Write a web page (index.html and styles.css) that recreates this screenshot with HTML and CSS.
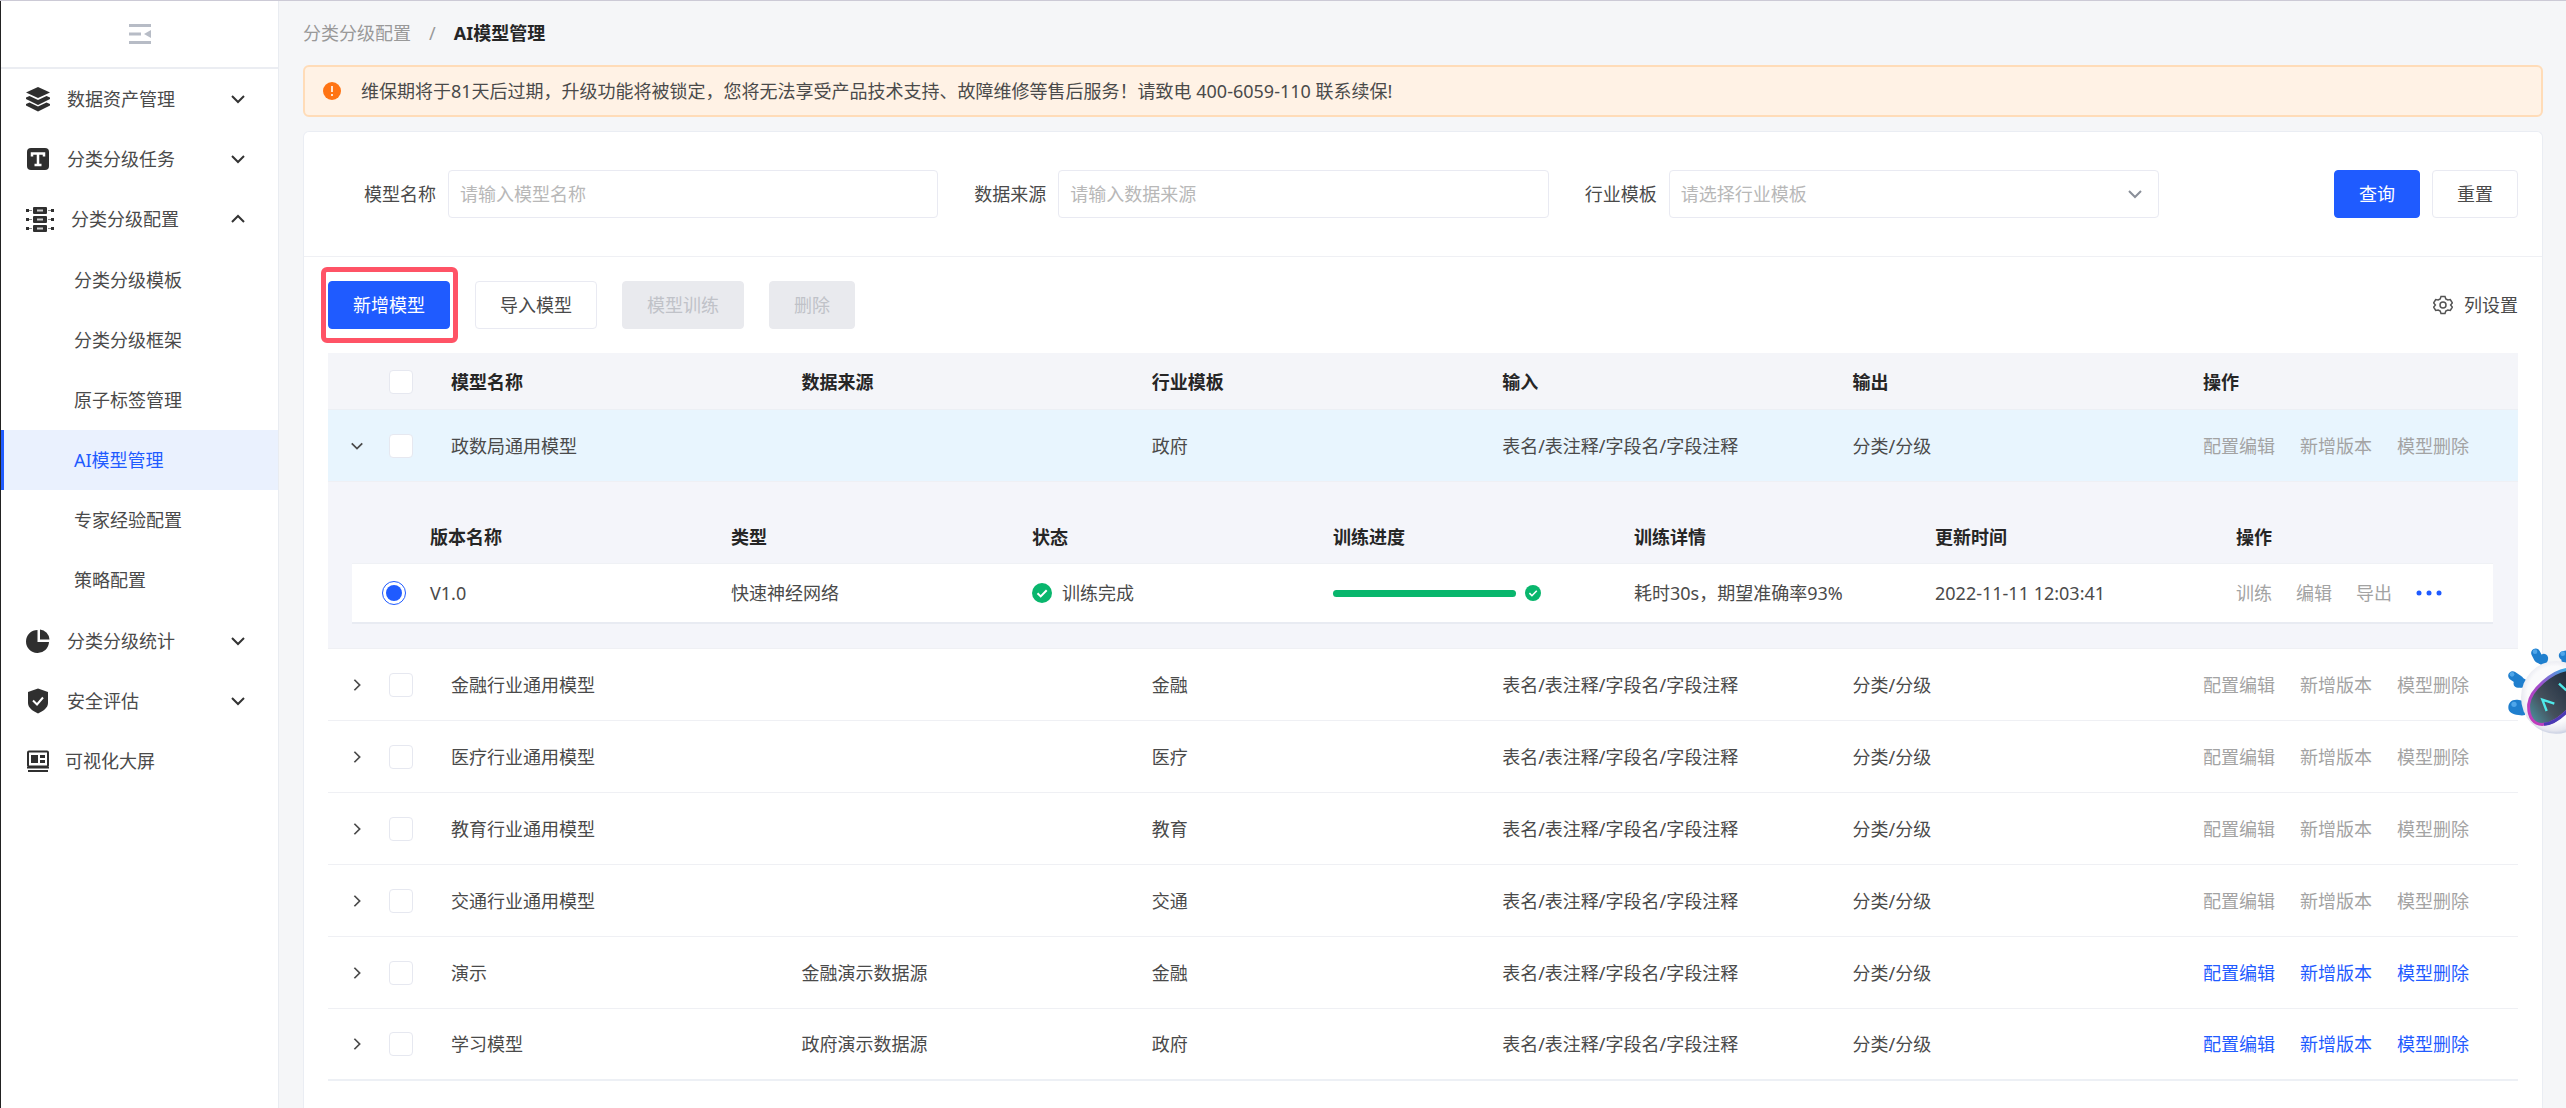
FILE: index.html
```html
<!DOCTYPE html>
<html lang="zh-CN">
<head>
<meta charset="utf-8">
<title>AI模型管理</title>
<link rel="stylesheet" href="styles.css">
</head>
<body>
<svg class="sprite" aria-hidden="true">
  <symbol id="down" viewBox="0 0 16 16"><path d="M2 5l6 6 6-6" fill="none" stroke="currentColor" stroke-width="2"/></symbol>
  <symbol id="up" viewBox="0 0 16 16"><path d="M2 11l6-6 6 6" fill="none" stroke="currentColor" stroke-width="2"/></symbol>
  <symbol id="right" viewBox="0 0 16 16"><path d="M5 2l6 6-6 6" fill="none" stroke="currentColor" stroke-width="2"/></symbol>
  <symbol id="ok" viewBox="0 0 20 20"><circle cx="10" cy="10" r="10" fill="#09b66d"/><path d="M5.500 10.200l3.200 3.200 6-6.200" fill="none" stroke="#fff" stroke-width="2"/></symbol>
</svg>
<div class="app">
  <aside class="sidebar">
    <div class="sidebar-head">
      <button class="collapse" type="button" aria-label="收起菜单">
        <svg width="22" height="20" viewBox="0 0 22 20"><path d="M0 1.500h22M0 10h12M0 18.500h22" stroke="#b7bcc6" stroke-width="3"/><path d="M22 6v8l-7-4z" fill="#b7bcc6"/></svg>
      </button>
    </div>
    <nav class="menu">
      <a class="item" href="#"><svg width="24" height="26" viewBox="0 0 24 26"><path d="M12 1l12 5.500-12 5.500L0 6.500z"/><path d="M0 11.500l3.500-1.500 8.500 4 8.500-4 3.500 1.500v1.500l-12 6-12-6zM0 18l3.500-1.500 8.500 4 8.500-4L24 18v1.500l-12 6-12-6z"/></svg><span>数据资产管理</span><svg class="arrow"><use href="#down"/></svg></a>
      <a class="item" href="#"><svg width="24" height="24" viewBox="0 0 24 24"><rect x="1" y="1" width="22" height="22" rx="4"/><path d="M6 9.500V6.500h12v3M12 6.500v11M8.500 18h7" fill="none" stroke="#fff" stroke-width="2.500"/></svg><span>分类分级任务</span><svg class="arrow"><use href="#down"/></svg></a>
      <a class="item" href="#"><svg width="28" height="26" viewBox="0 0 28 26"><rect x="7" y="1" width="14" height="7" rx="1"/><rect x="7" y="10" width="14" height="7" rx="1"/><rect x="7" y="19" width="14" height="7" rx="1"/><path d="M11 4.500h6M11 13.500h6M11 22.500h6" stroke="#d0d0d0" stroke-width="2"/><path d="M0 3h3v3H0zM0 12h3v3H0zM0 21h3v3H0zM25 3h3v3h-3zM25 12h3v3h-3zM25 21h3v3h-3z"/><path d="M3 4.500h3M3 13.500h3M3 22.500h3M22 4.500h3M22 13.500h3M22 22.500h3" stroke="#888" stroke-width="1"/></svg><span>分类分级配置</span><svg class="arrow"><use href="#up"/></svg></a>
      <div class="submenu">
        <a class="item" href="#">分类分级模板</a>
        <a class="item" href="#">分类分级框架</a>
        <a class="item" href="#">原子标签管理</a>
        <a class="item active" href="#" aria-current="page">AI模型管理</a>
        <a class="item" href="#">专家经验配置</a>
        <a class="item" href="#">策略配置</a>
      </div>
      <a class="item" href="#"><svg width="24" height="24" viewBox="0 0 24 24"><path d="M11.500 1v12H23A11.500 11.500 0 1 1 11.500 1z"/><path d="M14 0.500A10.500 10.500 0 0 1 23.500 10.500H14z"/></svg><span>分类分级统计</span><svg class="arrow"><use href="#down"/></svg></a>
      <a class="item" href="#"><svg width="24" height="26" viewBox="0 0 24 26"><path d="M12 0.500l10 3.500v11c0 5-5 8-10 10.500C7 23 2 20 2 15V4z"/><path d="M7 12.500l4 4 6-7" fill="none" stroke="#fff" stroke-width="2"/></svg><span>安全评估</span><svg class="arrow"><use href="#down"/></svg></a>
      <a class="item narrow" href="#"><svg width="24" height="24" viewBox="0 0 24 24"><rect x="2" y="2.500" width="20" height="15" rx="1" fill="none" stroke="#2f2f2f" stroke-width="2"/><path d="M5 6h7v8H5zM14 6h5v3h-5zM14 11h5v3h-5zM1 18h22v1.500H1zM2 21h20v2H2z"/></svg><span>可视化大屏</span></a>
    </nav>
  </aside>

  <main class="main">
    <nav class="crumbs" aria-label="面包屑"><a href="#">分类分级配置</a><span>/</span><strong>AI模型管理</strong></nav>

    <div class="alert" role="alert">
      <svg width="18" height="18" viewBox="0 0 18 18"><circle cx="9" cy="9" r="9" fill="#ff7414"/><path d="M9 4v6M9 12v2" stroke="#fff" stroke-width="1.600"/></svg>
      <span>维保期将于81天后过期，升级功能将被锁定，您将无法享受产品技术支持、故障维修等售后服务！请致电 400-6059-110 联系续保!</span>
    </div>

    <section class="card">
      <form class="filters">
        <div class="fields">
          <div class="field"><label for="f-name">模型名称</label><input id="f-name" class="control" type="text" placeholder="请输入模型名称"></div>
          <div class="field"><label for="f-source">数据来源</label><input id="f-source" class="control" type="text" placeholder="请输入数据来源"></div>
          <div class="field"><label for="f-tpl">行业模板</label><div class="select"><select id="f-tpl" class="control"><option>请选择行业模板</option></select><svg><use href="#down"/></svg></div></div>
        </div>
        <div class="form-actions">
          <button class="btn primary" type="submit">查询</button>
          <button class="btn" type="reset">重置</button>
        </div>
      </form>

      <div class="toolbar">
        <div class="marked"><button class="btn primary" type="button">新增模型</button></div>
        <button class="btn" type="button">导入模型</button>
        <button class="btn" type="button" disabled>模型训练</button>
        <button class="btn" type="button" disabled>删除</button>
        <button class="columns" type="button">
          <svg width="20" height="20" viewBox="0 0 20 20" fill="none" stroke="#555" stroke-width="1.500"><path d="M8 1.500h4l.8 2.400 2 1.100 2.500-.5 2 3.400L17.600 10l1.700 2.100-2 3.400-2.500-.5-2 1.100-.8 2.400H8l-.8-2.400-2-1.100-2.500.5-2-3.400L2.400 10 .7 7.900l2-3.400 2.500.5 2-1.100z"/><circle cx="10" cy="10" r="3"/></svg>
          <span>列设置</span>
        </button>
      </div>

      <table class="models">
        <colgroup><col class="c-expand"><col class="c-check"><col><col><col><col><col><col class="c-ops"></colgroup>
        <thead>
          <tr><th></th><th><input type="checkbox" aria-label="全选"></th><th>模型名称</th><th>数据来源</th><th>行业模板</th><th>输入</th><th>输出</th><th>操作</th></tr>
        </thead>
        <tbody>
          <tr class="open">
            <td><button class="expand" type="button" aria-label="收起"><svg><use href="#down"/></svg></button></td>
            <td><input type="checkbox" aria-label="选择政数局通用模型"></td>
            <td>政数局通用模型</td><td></td><td>政府</td><td>表名/表注释/字段名/字段注释</td><td>分类/分级</td>
            <td><div class="ops"><button type="button" disabled>配置编辑</button><button type="button" disabled>新增版本</button><button type="button" disabled>模型删除</button></div></td>
          </tr>
          <tr class="detail">
            <td colspan="8">
              <table class="versions">
                <colgroup><col class="c-radio"><col><col><col><col><col><col><col class="c-vops"></colgroup>
                <thead><tr><th></th><th>版本名称</th><th>类型</th><th>状态</th><th>训练进度</th><th>训练详情</th><th>更新时间</th><th>操作</th></tr></thead>
                <tbody>
                  <tr>
                    <td><input type="radio" name="version" aria-label="V1.0" checked></td>
                    <td>V1.0</td>
                    <td>快速神经网络</td>
                    <td><div class="status"><svg width="20" height="20"><use href="#ok"/></svg><span>训练完成</span></div></td>
                    <td><div class="progress"><div class="track"><div class="bar" style="width:100%"></div></div><svg width="16" height="16"><use href="#ok"/></svg></div></td>
                    <td>耗时30s，期望准确率93%</td>
                    <td>2022-11-11 12:03:41</td>
                    <td><div class="ops"><button type="button" disabled>训练</button><button type="button" disabled>编辑</button><button type="button" disabled>导出</button><button type="button" aria-label="更多"><svg width="26" height="6" viewBox="0 0 26 6" fill="currentColor"><circle cx="3" cy="3" r="2.500"/><circle cx="13" cy="3" r="2.500"/><circle cx="23" cy="3" r="2.500"/></svg></button></div></td>
                  </tr>
                </tbody>
              </table>
            </td>
          </tr>
          <tr>
            <td><button class="expand" type="button" aria-label="展开"><svg><use href="#right"/></svg></button></td>
            <td><input type="checkbox" aria-label="选择金融行业通用模型"></td>
            <td>金融行业通用模型</td><td></td><td>金融</td><td>表名/表注释/字段名/字段注释</td><td>分类/分级</td>
            <td><div class="ops"><button type="button" disabled>配置编辑</button><button type="button" disabled>新增版本</button><button type="button" disabled>模型删除</button></div></td>
          </tr>
          <tr>
            <td><button class="expand" type="button" aria-label="展开"><svg><use href="#right"/></svg></button></td>
            <td><input type="checkbox" aria-label="选择医疗行业通用模型"></td>
            <td>医疗行业通用模型</td><td></td><td>医疗</td><td>表名/表注释/字段名/字段注释</td><td>分类/分级</td>
            <td><div class="ops"><button type="button" disabled>配置编辑</button><button type="button" disabled>新增版本</button><button type="button" disabled>模型删除</button></div></td>
          </tr>
          <tr>
            <td><button class="expand" type="button" aria-label="展开"><svg><use href="#right"/></svg></button></td>
            <td><input type="checkbox" aria-label="选择教育行业通用模型"></td>
            <td>教育行业通用模型</td><td></td><td>教育</td><td>表名/表注释/字段名/字段注释</td><td>分类/分级</td>
            <td><div class="ops"><button type="button" disabled>配置编辑</button><button type="button" disabled>新增版本</button><button type="button" disabled>模型删除</button></div></td>
          </tr>
          <tr>
            <td><button class="expand" type="button" aria-label="展开"><svg><use href="#right"/></svg></button></td>
            <td><input type="checkbox" aria-label="选择交通行业通用模型"></td>
            <td>交通行业通用模型</td><td></td><td>交通</td><td>表名/表注释/字段名/字段注释</td><td>分类/分级</td>
            <td><div class="ops"><button type="button" disabled>配置编辑</button><button type="button" disabled>新增版本</button><button type="button" disabled>模型删除</button></div></td>
          </tr>
          <tr>
            <td><button class="expand" type="button" aria-label="展开"><svg><use href="#right"/></svg></button></td>
            <td><input type="checkbox" aria-label="选择演示"></td>
            <td>演示</td><td>金融演示数据源</td><td>金融</td><td>表名/表注释/字段名/字段注释</td><td>分类/分级</td>
            <td><div class="ops"><button type="button">配置编辑</button><button type="button">新增版本</button><button type="button">模型删除</button></div></td>
          </tr>
          <tr>
            <td><button class="expand" type="button" aria-label="展开"><svg><use href="#right"/></svg></button></td>
            <td><input type="checkbox" aria-label="选择学习模型"></td>
            <td>学习模型</td><td>政府演示数据源</td><td>政府</td><td>表名/表注释/字段名/字段注释</td><td>分类/分级</td>
            <td><div class="ops"><button type="button">配置编辑</button><button type="button">新增版本</button><button type="button">模型删除</button></div></td>
          </tr>
        </tbody>
      </table>
    </section>
  </main>
</div>

<button class="assistant" type="button" aria-label="智能助手">
  <svg width="60" height="90" viewBox="0 0 180 270">
    <defs>
      <linearGradient id="rim" x1="0" y1="1" x2="1" y2="0"><stop offset="0" stop-color="#c93ab8"/><stop offset=".5" stop-color="#a04ccc"/><stop offset="1" stop-color="#35b3e6"/></linearGradient>
      <linearGradient id="face" x1="0" y1="1" x2="1" y2="0"><stop offset="0" stop-color="#4d9aa8"/><stop offset=".4" stop-color="#45505c"/><stop offset="1" stop-color="#1c2a3c"/></linearGradient>
      <radialGradient id="shell" cx=".48" cy=".46" r=".55"><stop offset=".7" stop-color="#fafafc"/><stop offset=".9" stop-color="#e6e7ef"/><stop offset="1" stop-color="#c3cbe0"/></radialGradient>
    </defs>
    <g fill="none" stroke="#1f7fce" stroke-width="27" stroke-linecap="round" stroke-linejoin="round">
      <path d="M89 18l8 16 14 6"/>
      <path d="M109 40l4-6"/>
      <path d="M20 86l18 12 8 10"/>
      <path d="M36 109l14-1"/>
      <path d="M172 26l8-2v18"/>
    </g>
    <path d="M7 182c0-14 8-24 24-24 10 0 22 4 26 6v40c-6 2-12 2-20 0-18-2-30-10-30-22z" fill="#1f7fce"/>
    <g fill="#4fa6ea"><circle cx="87" cy="14" r="7"/><circle cx="18" cy="82" r="7"/><circle cx="24" cy="172" r="8"/><circle cx="170" cy="20" r="7"/></g>
    <ellipse cx="150" cy="151" rx="105" ry="109" fill="url(#shell)"/>
    <path d="M188 67C140 70 72 130 68 172c-2 40 16 62 44 60 28-2 50-20 76-44z" fill="url(#face)" stroke="url(#rim)" stroke-width="9"/>
    <path d="M182 194c-22 22-44 36-68 38" fill="none" stroke="#4a3bb4" stroke-width="9"/>
    <path d="M145 170l-36-12 13 34M159 110l22 20" fill="none" stroke="#4fe9ea" stroke-width="7"/>
  </svg>
</button>
</body>
</html>
```
FILE: styles.css
```css
* { box-sizing: border-box; }

body {
  margin: 0;
  background: #f5f6f8;
  color: #4a4a4a;
  font: 18px/24px "Noto Sans", "Noto Sans CJK SC", sans-serif;
}

button, input, select { font: inherit; color: inherit; }
button { padding: 0; border: 0; background: none; cursor: pointer; }
a { color: inherit; text-decoration: none; }
svg { display: block; flex: none; }
.sprite { position: absolute; width: 0; height: 0; }

.app {
  display: flex;
  min-height: 100vh;
  border-top: 1px solid #cccad6;
}

/* sidebar */
.sidebar {
  flex: none;
  width: 279px;
  background: #fff;
  border-left: 1px solid #222;
  border-right: 1px solid #e9ecf1;
}
.sidebar-head {
  display: flex;
  align-items: center;
  justify-content: center;
  height: 68px;
  border-bottom: 2px solid #ebedf2;
}
.item {
  display: flex;
  align-items: center;
  gap: 17px;
  height: 60px;
  padding: 0 32px 0 25px;
  fill: #2f2f2f;
}
.item.narrow { gap: 15px; }
.arrow { width: 16px; height: 16px; margin-left: auto; color: #333; }
.submenu { padding: 1px 0; }
.submenu .item { padding-left: 73px; }
.submenu .active {
  padding-left: 70px;
  border-left: 3px solid #1f5bff;
  background: #eaf1fe;
  color: #1f5bff;
}

/* page */
.main {
  display: flex;
  flex: 1;
  flex-direction: column;
  min-width: 0;
  padding: 0 23px 0 24px;
}
.crumbs { display: flex; gap: 18px; padding: 20px 0; color: #999; }
.crumbs strong { color: #262626; }
.alert {
  display: flex;
  align-items: center;
  gap: 20px;
  height: 52px;
  padding: 0 18px;
  border: 2px solid #ffdcb8;
  border-radius: 6px;
  background: #fff2e5;
}
.card {
  flex: 1;
  margin-top: 14px;
  padding-bottom: 24px;
  border: 1px solid #eaedf3;
  border-bottom: 0;
  border-radius: 6px 6px 0 0;
  background: #fff;
}

/* filters */
.filters {
  display: flex;
  align-items: center;
  justify-content: space-between;
  gap: 175px;
  height: 125px;
  padding: 0 24px 0 60px;
  border-bottom: 1px solid #eff0f4;
}
.fields { display: flex; flex: 1; gap: 36px; }
.field { display: flex; flex: 1; align-items: center; gap: 12px; }
.field label { flex: none; }
.control {
  flex: 1;
  width: 100%;
  min-width: 0;
  height: 48px;
  padding: 0 11px;
  border: 1px solid #e9eaf2;
  border-radius: 4px;
  background: #fff;
  appearance: none;
}
.control::placeholder, select.control { color: #b8b8b8; opacity: 1; }
.select { position: relative; display: flex; flex: 1; }
.select svg { position: absolute; top: 16px; right: 16px; width: 16px; height: 16px; color: #8a8f99; pointer-events: none; }
.form-actions { display: flex; gap: 12px; }

.btn {
  height: 48px;
  padding: 0 24px;
  border: 1px solid #e9eaf2;
  border-radius: 4px;
  background: #fff;
}
.btn.primary { border-color: #1f5bff; background: #1f5bff; color: #fff; }
.btn:disabled { border-color: #e9eaee; background: #e9eaee; color: #c0c2c8; }

.toolbar { display: flex; align-items: center; gap: 25px; padding: 24px; }
.marked { position: relative; }
.marked::after {
  content: "";
  position: absolute;
  inset: -14px -8px -14px -7px;
  border: 5px solid #ff5366;
  border-radius: 6px;
  pointer-events: none;
}
.columns { display: flex; align-items: center; gap: 11px; margin-left: auto; }

/* tables */
table { table-layout: fixed; border-spacing: 0; }
th, td { padding: 0 0 0 16px; text-align: left; white-space: nowrap; }
th { color: #262626; font-weight: 700; }
.models { width: calc(100% - 48px); margin: 0 24px; }
.c-expand { width: 45px; }
.c-check { width: 62px; }
.c-ops { width: 331px; }
.models > thead th { height: 57px; padding-top: 2px; background: #f4f5f9; border-bottom: 1px solid #eceff4; }
.models > tbody > tr > td { height: 72px; border-bottom: 1px solid #eff0f4; }
.models > tbody > tr:last-child > td { border-bottom: 2px solid #edf0f5; }
.models > tbody > .open > td { background: #e8f5fe; }
.models > tbody > .detail > td { height: auto; padding: 26px 25px 24px 24px; background: #f4f5fa; }
.expand { display: block; margin-left: 6px; }
.expand svg { width: 14px; height: 14px; }

.versions { width: 100%; }
.c-radio { width: 62px; }
.c-vops { width: 273px; }
.versions th { height: 56px; padding-top: 2px; border-bottom: 1px solid #eff1f5; }
.versions td { height: 60px; border-bottom: 2px solid #e8ebf2; background: #fff; }
.versions td:first-child { padding-left: 30px; }

input[type="checkbox"], input[type="radio"] {
  display: block;
  width: 24px;
  height: 24px;
  margin: 0;
  border: 1px solid #e6e8f0;
  border-radius: 4px;
  background: #fff;
  appearance: none;
}
input[type="radio"] { border: 1px solid #1f5bff; border-radius: 50%; padding: 3px; }
input[type="radio"]:checked { background: #1f5bff content-box; }

.ops { display: flex; align-items: center; gap: 25px; color: #1f5bff; }
.versions .ops { gap: 24px; }
.ops button:disabled { color: #a3a3a3; }
.status { display: flex; align-items: center; gap: 10px; }
.progress { display: flex; align-items: center; gap: 9px; }
.track { width: 183px; height: 7px; border-radius: 4px; background: #e9eaee; }
.bar { height: 100%; border-radius: 4px; background: #09b66d; }

.assistant { position: fixed; top: 647px; right: 0; }
```
